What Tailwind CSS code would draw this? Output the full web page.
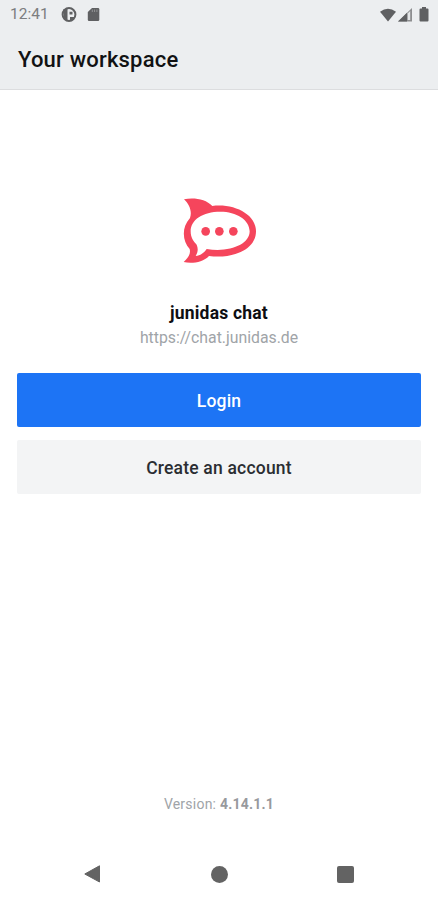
<!DOCTYPE html>
<html lang="en">
<head>
    <meta charset="UTF-8">
    <meta name="viewport" content="width=device-width, initial-scale=1.0">
    <title>Your workspace</title>
    <script src="https://cdn.jsdelivr.net/npm/@tailwindcss/browser@4"></script>
</head>
<body class="bg-white font-[Roboto,sans-serif]">
    <div class="flex h-[900px] w-[438px] flex-col overflow-hidden">
        <header class="h-[90px] border-b border-[#dcdddf] bg-[#eceef0]">
            <!-- Status bar -->
            <div class="flex h-[29px] items-center justify-between pl-[10px] pr-[8px] text-[#5f6062]">
                <div class="flex items-center">
                    <span class="w-[51px] pt-px text-[15.5px] leading-none text-[#7c7d7f]">12:41</span>
                    <svg class="h-4 w-4" viewBox="0 0 16 16">
                        <circle cx="8" cy="7.5" r="6.4" fill="none" stroke="currentColor" stroke-width="2"/>
                        <path d="M2 2.5L6.5 2V13.5L3 12ZM8.5 4.8H11.5V7.5H8.5Z" fill="currentColor"/>
                        <path d="M9 10H14L11 13.5L9 14Z" fill="currentColor"/>
                    </svg>
                    <svg class="ml-[10px] h-[15px] w-[13px]" viewBox="0 0 13 15">
                        <path d="M5 1H11Q12.3 1 12.3 2.3V12.7Q12.3 14 11 14H2Q.8 14 .8 12.7V5Z" fill="currentColor"/>
                        <path d="M5.3 2.5V5M7.6 2.5V5M9.9 2.5V5" stroke="#97999b" stroke-width=".9"/>
                    </svg>
                </div>
                <div class="flex items-center">
                    <svg class="h-[14px] w-4" viewBox="0 0 16 14">
                        <path d="M0 3.8Q8-2.2 16 3.8L8 13.5Z" fill="currentColor"/>
                    </svg>
                    <svg class="ml-[2px] h-[14px] w-[14px]" viewBox="0 0 14 14">
                        <path d="M0 13.5L14 0V13.5Z" fill="#8d8e90"/>
                        <path d="M0 13.5L9 4.8V13.5Z" fill="currentColor"/>
                        <path d="M9.7 5.5L12.2 3V12H9.7Z" fill="#e3e5e7"/>
                    </svg>
                    <svg class="ml-[7px] mr-px h-[15px] w-[10px]" viewBox="0 0 10 15">
                        <path d="M3 0H7V1.6H8.5Q9.5 1.6 9.5 2.6V13.5Q9.5 14.5 8.5 14.5H1.5Q.5 14.5 .5 13.5V2.6Q.5 1.6 1.5 1.6H3Z" fill="currentColor"/>
                    </svg>
                </div>
            </div>
            <h1 class="pl-[18px] pt-[15px] text-[22px] font-medium leading-[32px] tracking-[0.2px] text-[#111213]">Your workspace</h1>
        </header>

        <main class="flex flex-1 flex-col items-center px-[17px] pt-[95px]">
            <svg class="ml-[2px] h-[90px] w-[100px]" viewBox="0 0 300 270">
                <path fill="#f5455c" fill-rule="evenodd" d="M42 43C73 37 108 43 127 63C193 55 258 88 258 139C258 194 190 222 117 213C99 232 65 237 41 231C54 218 63 208 59 192C37 167 34 128 60 99C67 79 58 58 42 43ZM151 80C98 80 62 104 62 139C62 158 70 169 80 179C85 191 84 201 77 213C93 212 103 202 110 192C178 203 239 179 239 139C239 104 199 80 151 80Z"/>
                <g fill="#f5455c">
                    <circle cx="107" cy="139" r="13"/>
                    <circle cx="148" cy="139" r="13"/>
                    <circle cx="190" cy="139" r="13"/>
                </g>
            </svg>
            <h2 class="mt-[26px] text-[17.5px] font-bold leading-6 tracking-[0.2px] text-[#0d0e12]">junidas chat</h2>
            <p class="pt-px text-[15.8px] leading-6 text-[#a0a4a8]">https://chat.junidas.de</p>
            <button class="mt-[23px] h-[54px] w-full rounded-[2px] bg-[#1d74f5] pt-[2px] text-[17.5px] font-medium tracking-[0.2px] text-white">Login</button>
            <button class="mt-[13px] h-[54px] w-full rounded-[2px] bg-[#f3f4f5] pt-[2px] text-[17.5px] font-medium tracking-[0.2px] text-[#2a2d32]">Create an account</button>
        </main>

        <footer class="pb-[17px]">
            <p class="text-center text-[14px] leading-5 tracking-[0.23px] text-[#a0a4a8]">Version: <span class="font-bold text-[#97999d]">4.14.1.1</span></p>
            <div class="mt-[51px] flex h-[18px] items-center justify-between px-[84px] text-[#636363]">
                <svg class="h-[18px] w-[17px]" viewBox="0 0 17 18">
                    <path d="M15.5 .8V17L.8 9Z" fill="currentColor" stroke="currentColor" stroke-linejoin="round"/>
                </svg>
                <div class="h-[17px] w-[17px] rounded-full bg-[#636363]"></div>
                <div class="h-[17px] w-[17px] rounded-[2px] bg-[#636363]"></div>
            </div>
        </footer>
    </div>
</body>
</html>
